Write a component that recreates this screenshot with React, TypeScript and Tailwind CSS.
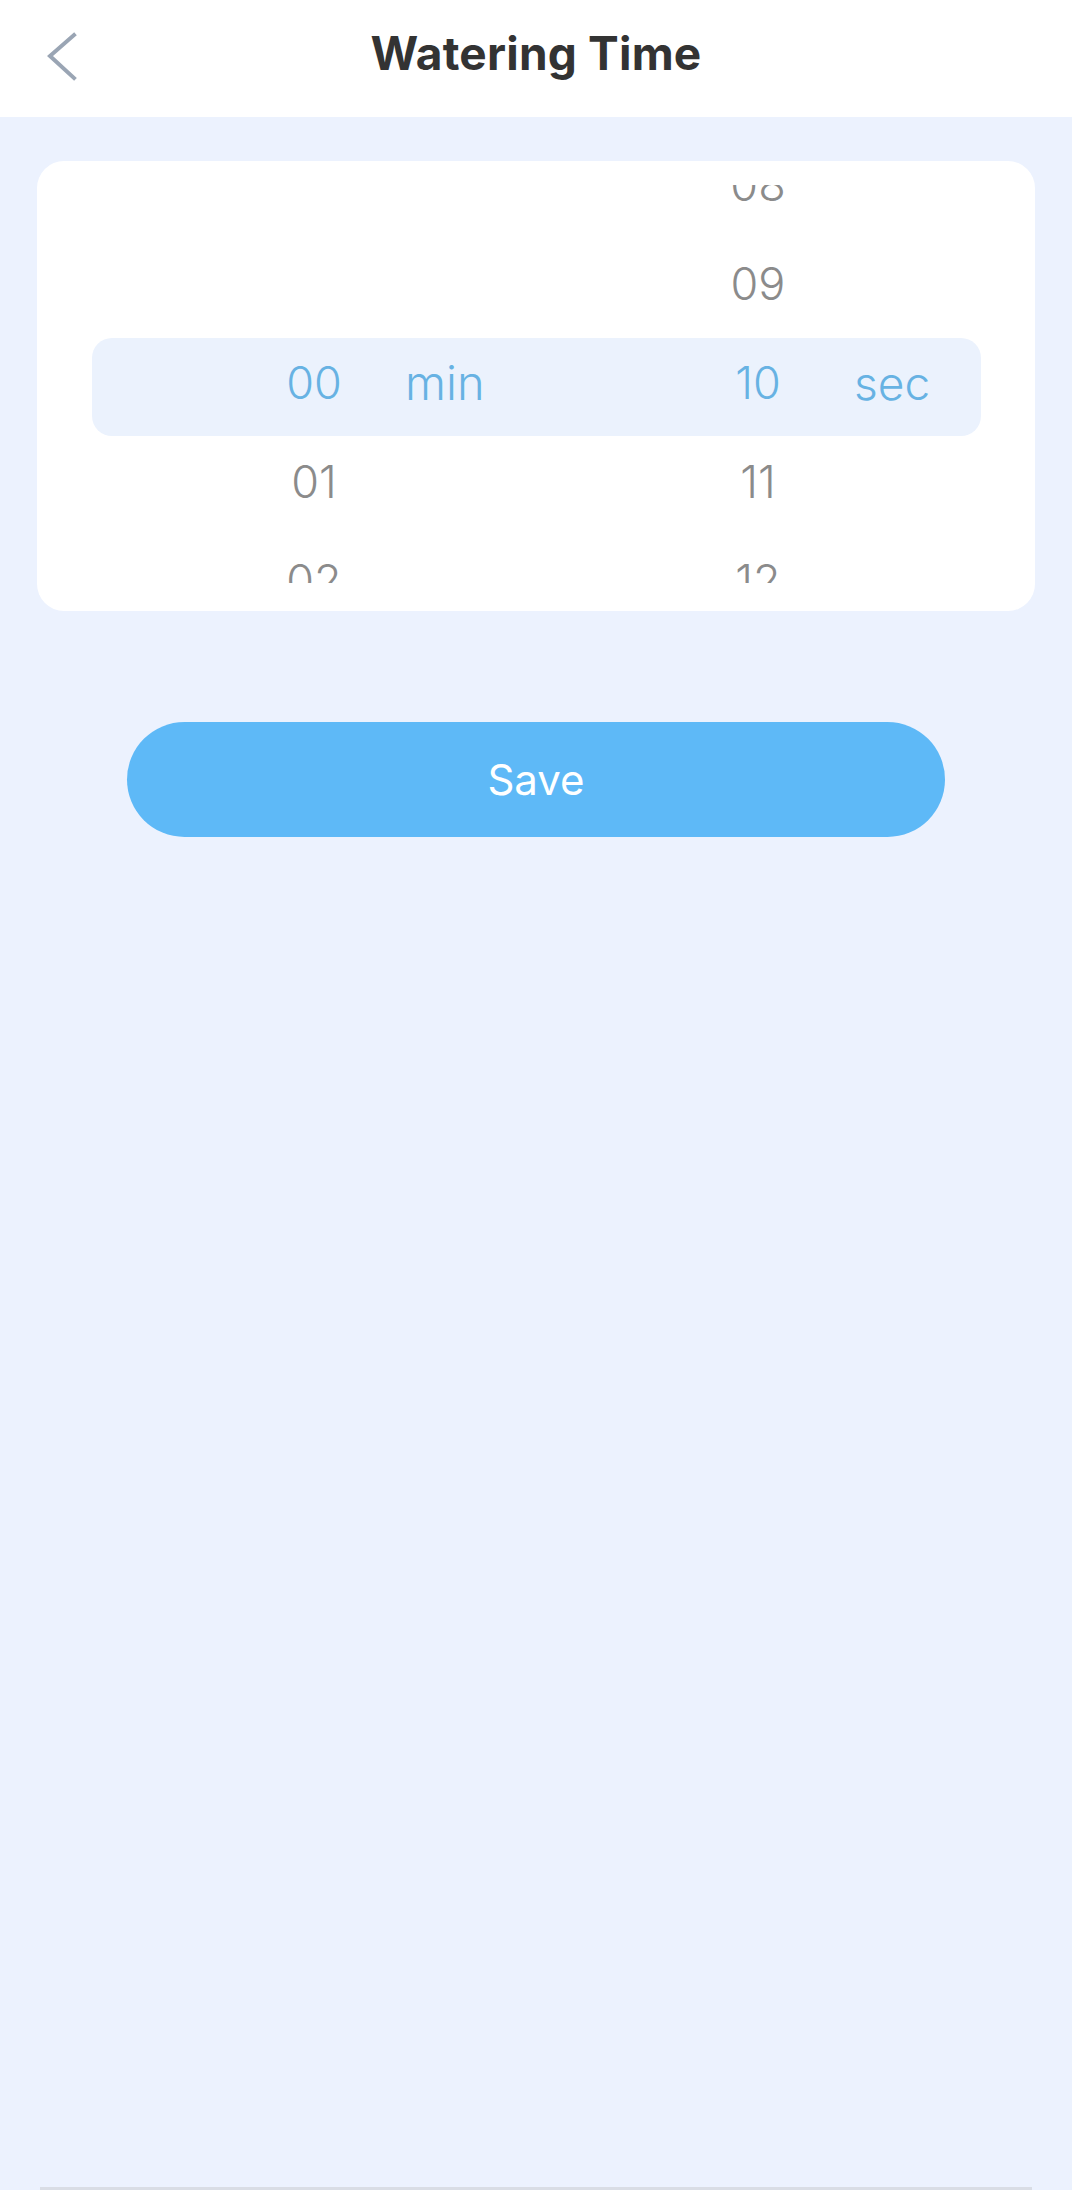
import React from "react";

const MINUTES = ["", "", "00", "01", "02"];
const SECONDS = ["08", "09", "10", "11", "12"];

function WheelColumn({ values }: { values: string[] }) {
  return (
    <div className="flex w-[100px] shrink-0 flex-col -mt-[50px]">
      {values.map((v, i) => (
        <div
          key={i}
          className={`flex h-[99px] shrink-0 items-center justify-center text-[45px] font-light leading-none ${
            i === 2 ? "text-[#67b2e3]" : "text-[#8b8b8b]"
          }`}
        >
          {v}
        </div>
      ))}
    </div>
  );
}

export default function App() {
  return (
    <div
      className="flex h-[2190px] w-[1072px] flex-col bg-[#ecf2fe]"
      style={{ fontFamily: "Inter, 'Noto Sans', sans-serif" }}
    >
      {/* Header */}
      <div className="flex h-[117px] shrink-0 items-center bg-white pb-[12px]">
        <div className="flex w-[120px] items-center pl-[46px] pt-[9px]">
          <svg width="32" height="50" viewBox="0 0 32 50" fill="none">
            <polyline
              points="28,3 4,24 28,46"
              stroke="#9aa5b4"
              strokeWidth="4"
              strokeLinecap="square"
              strokeLinejoin="miter"
            />
          </svg>
        </div>
        <h1 className="flex-1 text-center text-[46px] font-bold leading-none tracking-[0.2px] text-[#333333]">
          Watering Time
        </h1>
        <div className="w-[120px]" />
      </div>

      {/* Picker card */}
      <div className="mx-[37px] mt-[44px] rounded-[27px] bg-white pt-[24px] pb-[28px]">
        <div className="relative h-[398px] overflow-hidden">
          <div className="absolute left-[55px] right-[54px] top-[153px] h-[98px] rounded-[20px] bg-[#ebf2fd]" />
          <div className="relative flex h-full">
            <div className="w-[227px] shrink-0" />
            <WheelColumn values={MINUTES} />
            <div className="flex w-[344px] shrink-0 items-center pl-[41px] pb-[3px] text-[47px] font-light leading-none text-[#67b2e3]">
              min
            </div>
            <WheelColumn values={SECONDS} />
            <div className="flex items-center pl-[46px] pb-[3px] text-[46px] font-light leading-none text-[#67b2e3]">
              sec
            </div>
          </div>
        </div>
      </div>

      {/* Save */}
      <button className="mx-[127px] mt-[111px] flex h-[115px] items-center justify-center rounded-full bg-[#5eb9f7] text-[42px] font-normal text-white">
        Save
      </button>

      <div className="flex-1" />
      <div className="mx-[40px] h-[3px] bg-[#d9dde5]" />
    </div>
  );
}
